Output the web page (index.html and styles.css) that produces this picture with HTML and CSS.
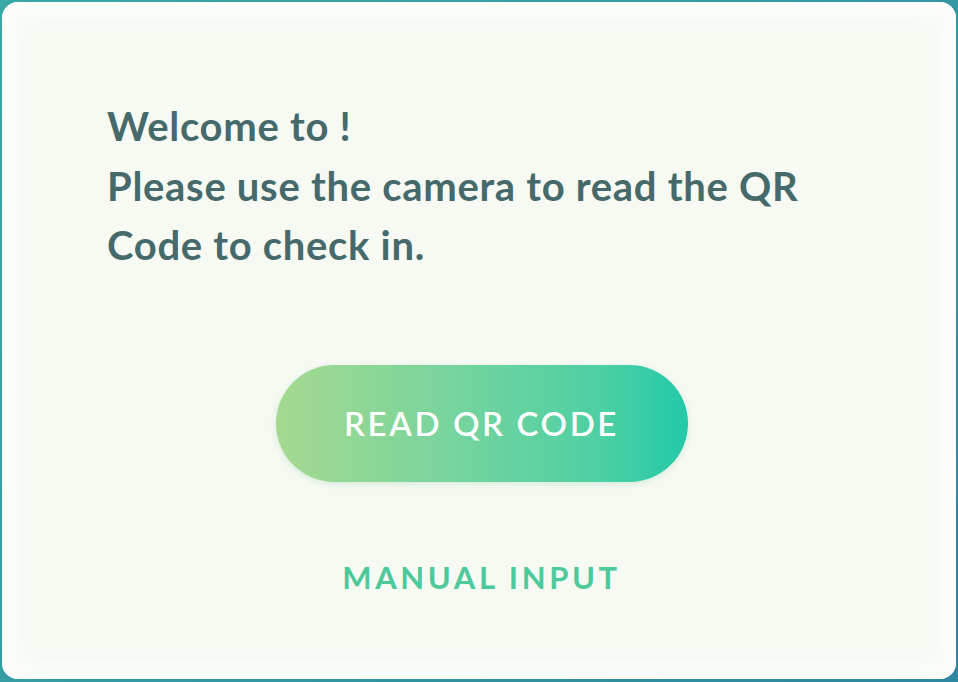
FILE: index.html
```html
<!DOCTYPE html>
<html>
<head>
<meta charset="utf-8">
<link rel="stylesheet" href="styles.css">
</head>
<body>
<div class="stage">
  <div class="card">
    <div class="message">
      <p>Welcome to !</p>
      <p>Please use the camera to read the QR Code to check in.</p>
    </div>
    <div class="actions">
      <button class="btn-primary">READ QR CODE</button>
      <button class="btn-link">MANUAL INPUT</button>
    </div>
  </div>
</div>
</body>
</html>
```
FILE: styles.css
```css
html, body {
  margin: 0;
  padding: 0;
  width: 958px;
  height: 682px;
  overflow: hidden;
}
.stage {
  width: 958px;
  height: 682px;
  box-sizing: border-box;
  padding: 2px 2px 3px 2px;
  background: linear-gradient(135deg, #3aa9a6 0%, #349aa3 50%, #2e86a0 100%);
  display: flex;
}
.card {
  flex: 1;
  border-radius: 16px;
  background: #f6faf3;
  box-shadow: inset 0 0 24px 10px rgba(255,255,255,0.9);
  padding: 95px 100px 0 105px;
  display: flex;
  flex-direction: column;
  font-family: Lato, "Noto Sans", sans-serif;
}
.message {
  color: #466a6c;
  font-weight: 700;
  font-size: 40px;
  letter-spacing: 0.7px;
  line-height: 59.5px;
  width: 720px;
}
.message p {
  margin: 0;
}
.actions {
  display: flex;
  flex-direction: column;
  align-items: center;
  margin-top: 89px;
}
.btn-primary {
  width: 412px;
  height: 117px;
  border: none;
  border-radius: 59px;
  background: linear-gradient(90deg, #a5d98f 0%, #74d49e 45%, #4ccfa4 80%, #22c9a9 100%);
  color: #ffffff;
  font-family: Lato, sans-serif;
  font-weight: 600;
  font-size: 33px;
  letter-spacing: 2.6px;
  padding: 0;
  box-shadow: 0 2px 6px rgba(120,190,150,0.25);
}
.btn-link {
  margin-top: 76px;
  border: none;
  background: none;
  color: #4ec99b;
  font-family: Lato, sans-serif;
  font-weight: 700;
  font-size: 31px;
  letter-spacing: 3.6px;
  padding: 0;
}
```
